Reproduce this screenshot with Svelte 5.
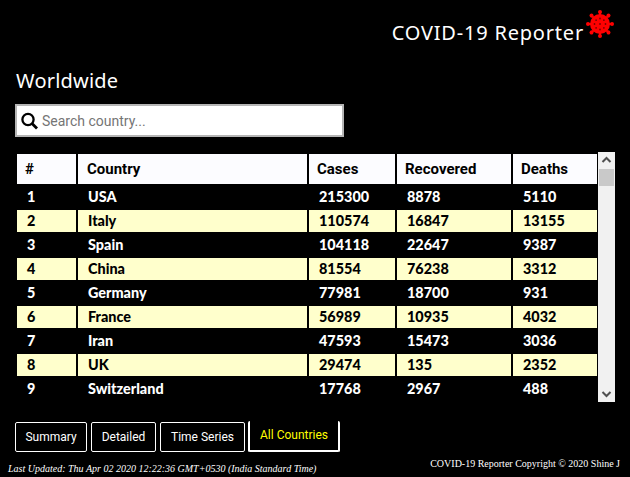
<script>
	let rows = [
		[1, 'USA', 215300, 8878, 5110],
		[2, 'Italy', 110574, 16847, 13155],
		[3, 'Spain', 104118, 22647, 9387],
		[4, 'China', 81554, 76238, 3312],
		[5, 'Germany', 77981, 18700, 931],
		[6, 'France', 56989, 10935, 4032],
		[7, 'Iran', 47593, 15473, 3036],
		[8, 'UK', 29474, 135, 2352],
		[9, 'Switzerland', 17768, 2967, 488]
	];
	let tabs = ['Summary', 'Detailed', 'Time Series', 'All Countries'];
	let spikes = [0, 45, 90, 135, 180, 225, 270, 315];
</script>

<div class="page">
	<header class="top">
		<h1>COVID-19 Reporter</h1>
		<svg class="virus" width="28" height="28" viewBox="0 0 28 28">
			<g fill="#f00" stroke="#f00">
				{#each spikes as a}
					<g transform="rotate({a} 14 14)">
						<line x1="14" y1="5" x2="14" y2="1" stroke-width="2" />
						<circle cx="14" cy="2" r="2" stroke="none" />
					</g>
				{/each}
				<circle cx="14" cy="14" r="10" stroke="none" />
			</g>
			<g fill="#7a0000">
				<circle cx="14" cy="14" r="0.9" />
				{#each spikes as a}
					<g transform="rotate({a} 14 14)">
						<circle cx="14" cy="8.5" r="0.9" />
					</g>
				{/each}
			</g>
		</svg>
	</header>

	<h2>Worldwide</h2>

	<div class="search">
		<svg width="20" height="20" viewBox="0 0 20 20">
			<circle cx="8" cy="8.5" r="5.6" fill="none" stroke="#000" stroke-width="2.3" />
			<line x1="12" y1="12.5" x2="17" y2="17.5" stroke="#000" stroke-width="2.8" />
		</svg>
		<span>Search country...</span>
	</div>

	<div class="table-wrap">
		<div class="table">
			<div class="row head">
				<div>#</div>
				<div>Country</div>
				<div>Cases</div>
				<div>Recovered</div>
				<div>Deaths</div>
			</div>
			{#each rows as row, i}
				<div class="row" class:odd={i % 2 === 1}>
					{#each row as cell}
						<div>{cell}</div>
					{/each}
				</div>
			{/each}
		</div>
		<div class="scrollbar">
			<svg width="17" height="17" viewBox="0 0 17 17">
				<path d="M4.5 10 L8.5 6 L12.5 10" fill="none" stroke="#505050" stroke-width="2" />
			</svg>
			<div class="thumb"></div>
			<div class="spacer"></div>
			<svg width="17" height="17" viewBox="0 0 17 17">
				<path d="M4.5 7 L8.5 11 L12.5 7" fill="none" stroke="#505050" stroke-width="2" />
			</svg>
		</div>
	</div>

	<nav class="tabs">
		{#each tabs as tab, i}
			<button class:active={i === 3}>{tab}</button>
		{/each}
	</nav>

	<footer>
		<em>Last Updated: Thu Apr 02 2020 12:22:36 GMT+0530 (India Standard Time)</em>
		<span>COVID-19 Reporter Copyright © 2020 Shine J</span>
	</footer>
</div>

<style>
	:global(body) {
		background: #000;
		overflow: hidden;
	}

	.page {
		height: 477px;
		display: flex;
		flex-direction: column;
		color: #fff;
		font-family: Roboto, sans-serif;
	}

	.top {
		display: flex;
		justify-content: flex-end;
		align-items: flex-start;
		padding: 10px 16px 0 0;
		height: 60px;
		box-sizing: border-box;
	}

	h1 {
		margin: 10px 2px 0 0;
		font-family: 'Noto Sans', sans-serif;
		font-size: 20px;
		line-height: 26px;
		font-weight: 400;
		letter-spacing: 0.8px;
	}

	.virus {
		display: block;
	}

	h2 {
		margin: 8px 0 0 16px;
		font-family: 'Noto Sans', sans-serif;
		font-size: 20px;
		line-height: 26px;
		font-weight: 400;
		letter-spacing: 0.2px;
	}

	.search {
		margin: 10px 0 0 15px;
		width: 329px;
		height: 33px;
		box-sizing: border-box;
		background: #fff;
		border: 2px solid #b5b5b5;
		display: flex;
		align-items: center;
		gap: 2px;
		padding-left: 3px;
	}

	.search span {
		color: #757575;
		font-size: 14px;
	}

	.table-wrap {
		margin: 15px 0 0 17px;
		width: 598px;
		height: 250px;
		display: flex;
		justify-content: space-between;
	}

	.table {
		width: 580px;
		padding-top: 2px;
		overflow: hidden;
		box-sizing: border-box;
	}

	.row {
		display: grid;
		grid-template-columns: 59px 229px 86px 114px 84px;
		column-gap: 2px;
		height: 24px;
		font-family: Lato, sans-serif;
		font-weight: 900;
		font-size: 14.4px;
		line-height: 24px;
	}

	.row > div {
		padding-left: 10px;
		white-space: nowrap;
	}

	.row.odd > div {
		background: #ffc;
		color: #000;
		height: 22px;
		margin-top: 1px;
		line-height: 22px;
	}

	.head {
		height: 31px;
		font-family: Roboto, sans-serif;
		font-weight: 700;
		font-size: 15px;
		line-height: 30px;
	}

	.head > div {
		background: #fcfcff;
		color: #000;
		height: 30px;
		padding-left: 9px;
	}

	.head > div:first-child,
	.head > div:nth-child(n + 3) {
		padding-left: 8px;
	}

	.scrollbar {
		width: 17px;
		height: 250px;
		background: #f1f1f1;
		display: flex;
		flex-direction: column;
	}

	.thumb {
		height: 17px;
		margin: 0 1px;
		background: #c9c9c9;
	}

	.spacer {
		flex: 1;
	}

	.tabs {
		margin: 19px 0 0 15px;
		display: flex;
		align-items: flex-end;
		gap: 4px;
	}

	button {
		height: 30px;
		padding: 0;
		background: #000;
		color: #fff;
		border: 1px solid #fff;
		border-radius: 2px;
		font-family: Roboto, sans-serif;
		font-size: 12px;
		width: 72px;
	}

	button:nth-child(2) {
		width: 65px;
	}

	button:nth-child(3) {
		width: 85px;
	}

	button.active {
		width: 92px;
		height: 31px;
		margin-left: -1px;
		padding: 0 0 1px;
		color: #ff0;
		border: 2px solid #fff;
		border-top: none;
	}

	footer {
		margin-top: 6px;
		padding: 0 10px 0 8px;
		display: flex;
		justify-content: space-between;
		align-items: flex-start;
		font-family: 'Liberation Serif', serif;
	}

	footer em {
		font-size: 10px;
		margin-top: 5px;
	}

	footer span {
		font-size: 10px;
	}
</style>
